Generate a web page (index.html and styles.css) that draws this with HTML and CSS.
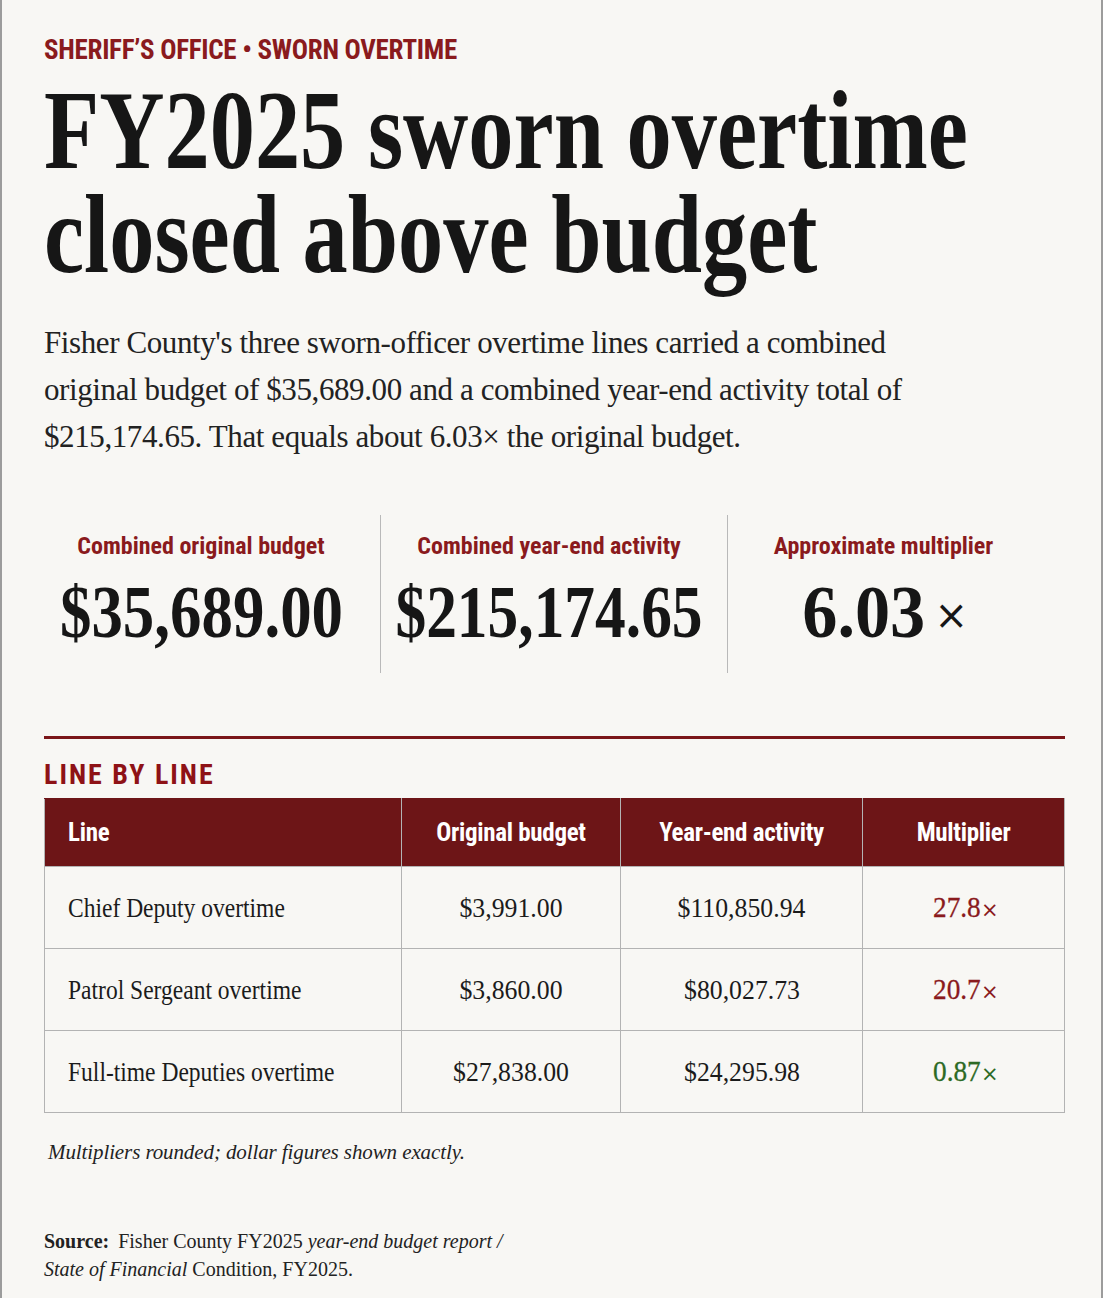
FILE: index.html
```html
<!DOCTYPE html>
<html lang="en">
<head>
<meta charset="utf-8">
<title>FY2025 sworn overtime closed above budget</title>
<link rel="stylesheet" href="styles.css">
</head>
<body>
<div class="page">
  <p class="kicker">SHERIFF’S OFFICE • SWORN OVERTIME</p>
  <h1 class="headline">FY2025 sworn overtime closed above budget</h1>
  <p class="dek">Fisher County's three sworn-officer overtime lines carried a combined original budget of $35,689.00 and a combined year-end activity total of $215,174.65. That equals about 6.03× the original budget.</p>

  <div class="stats">
    <div class="stat">
      <div class="stat-label">Combined original budget</div>
      <div class="stat-value"><span class="num num-a">$35,689.00</span></div>
    </div>
    <div class="stat">
      <div class="stat-label">Combined year-end activity</div>
      <div class="stat-value"><span class="num">$215,174.65</span></div>
    </div>
    <div class="stat">
      <div class="stat-label">Approximate multiplier</div>
      <div class="stat-value"><span class="num num-short">6.03</span><span class="times">×</span></div>
    </div>
  </div>

  <hr class="rule">
  <h2 class="section">LINE BY LINE</h2>

  <table class="lines">
    <thead>
      <tr>
        <th class="c-line">Line</th>
        <th>Original budget</th>
        <th>Year-end activity</th>
        <th>Multiplier</th>
      </tr>
    </thead>
    <tbody>
      <tr>
        <td class="c-line"><span class="txt">Chief Deputy overtime</span></td>
        <td><span class="fig">$3,991.00</span></td>
        <td><span class="fig">$110,850.94</span></td>
        <td class="mult over"><span class="fig">27.8</span><span class="x">×</span></td>
      </tr>
      <tr>
        <td class="c-line"><span class="txt">Patrol Sergeant overtime</span></td>
        <td><span class="fig">$3,860.00</span></td>
        <td><span class="fig">$80,027.73</span></td>
        <td class="mult over"><span class="fig">20.7</span><span class="x">×</span></td>
      </tr>
      <tr>
        <td class="c-line"><span class="txt">Full-time Deputies overtime</span></td>
        <td><span class="fig">$27,838.00</span></td>
        <td><span class="fig">$24,295.98</span></td>
        <td class="mult under"><span class="fig">0.87</span><span class="x">×</span></td>
      </tr>
    </tbody>
  </table>

  <p class="note">Multipliers rounded; dollar figures shown exactly.</p>

  <p class="source"><strong>Source:</strong> <span class="up">Fisher County FY2025</span> <em>year-end budget report /</em><br><em>State of Financial</em> <span class="up">Condition, FY2025.</span></p>
</div>
</body>
</html>
```

FILE: styles.css
```css
html, body {
  margin: 0;
  padding: 0;
  background: #f8f7f4;
}

.page {
  box-sizing: border-box;
  min-height: 100vh;
  border-left: 2px solid #9c9c9c;
  border-right: 2px solid #9c9c9c;
  background: #f8f7f4;
  padding: 33px 36px 40px 42px;
  overflow: hidden;
  color: #1b1b1b;
  font-family: "Liberation Serif", "Times New Roman", serif;
}

.kicker {
  margin: 0;
  font-family: "Roboto Condensed", "Liberation Sans Narrow", "DejaVu Sans Condensed", Roboto, sans-serif;
  font-weight: 700;
  font-size: 27px;
  line-height: 34px;
  letter-spacing: -0.3px;
  color: #8a1a1d;
}

.headline {
  margin: 11px 0 0;
  width: 125%;
  transform: scaleX(0.8);
  transform-origin: 0 0;
  font-family: "Liberation Serif", "Times New Roman", serif;
  font-weight: 700;
  font-size: 113px;
  line-height: 104px;
  color: #161616;
}

.dek {
  margin: 33px 0 0;
  max-width: 905px;
  font-size: 31px;
  line-height: 47px;
  letter-spacing: -0.4px;
  color: #222;
}

.stats {
  display: grid;
  grid-template-columns: 336px 347px 1fr;
  margin-top: 55px;
}

.stat {
  text-align: center;
  padding: 16px 0 21px;
  min-width: 0;
}

.stat:nth-child(1) { padding-right: 22px; }
.stat:nth-child(2) { border-left: 1px solid #b9b9b9; padding-right: 10px; }
.stat:nth-child(3) { border-left: 1px solid #b9b9b9; padding-right: 26px; }

.stat-label {
  font-family: "Roboto Condensed", "Liberation Sans Narrow", "DejaVu Sans Condensed", Roboto, sans-serif;
  font-weight: 700;
  font-size: 24px;
  line-height: 30px;
  color: #8a1a1d;
}

.stat-value {
  display: flex;
  justify-content: center;
  align-items: center;
  margin-top: 11px;
  height: 80px;
  font-size: 74px;
  line-height: 80px;
  font-weight: 700;
  color: #161616;
  white-space: nowrap;
}

.num {
  display: inline-block;
  transform: scaleX(0.83);
  transform-origin: 50% 50%;
}

.num-a {
  transform: scaleX(0.85);
}

.num-short {
  transform: scaleX(0.95);
}

.times {
  display: inline-block;
  font-family: "DejaVu Sans", sans-serif;
  font-weight: 400;
  font-size: 40px;
  line-height: 40px;
  margin-left: 6px;
  margin-top: 6px;
}

.rule {
  margin: 63px 0 0;
  border: 0;
  height: 3px;
  background: #7b1619;
}

.section {
  margin: 19px 0 0;
  font-family: "Roboto Condensed", "Liberation Sans Narrow", "DejaVu Sans Condensed", Roboto, sans-serif;
  font-weight: 700;
  font-size: 28px;
  line-height: 34px;
  letter-spacing: 2px;
  color: #8e1216;
}

.lines {
  margin-top: 6px;
  width: 100%;
  border-collapse: collapse;
  table-layout: fixed;
  border: 1px solid #b3b3b3;
}

.lines th,
.lines td {
  box-sizing: border-box;
}

.lines th:nth-child(1) { width: 357px; }
.lines th:nth-child(2) { width: 219px; }
.lines th:nth-child(3) { width: 242px; }

.lines th {
  height: 68px;
  padding: 0;
  background: #6d1517;
  color: #fff;
  font-family: "Roboto Condensed", "Liberation Sans Narrow", "DejaVu Sans Condensed", Roboto, sans-serif;
  font-weight: 700;
  font-size: 25px;
  letter-spacing: -0.3px;
  text-align: center;
  border: 1px solid #b3b3b3;
  border-top-color: #6d1517;
}

.lines th.c-line {
  text-align: left;
  padding-left: 23px;
}

.lines td {
  height: 82px;
  padding: 0;
  text-align: center;
  border: 1px solid #b3b3b3;
  font-size: 28px;
  color: #1b1b1b;
}

.lines td.c-line {
  text-align: left;
  padding-left: 23px;
}

.txt {
  display: inline-block;
  transform: scaleX(0.84);
  transform-origin: 0 50%;
  white-space: nowrap;
}

.fig {
  display: inline-block;
  transform: scaleX(0.92);
  transform-origin: 50% 50%;
}

.lines td.mult {
  white-space: nowrap;
  padding-left: 2px;
  font-size: 29px;
}

.lines td.mult .fig {
  transform: scaleX(0.94);
  transform-origin: 100% 50%;
  -webkit-text-stroke: 0.3px currentColor;
}

.x {
  font-family: "DejaVu Sans", sans-serif;
  font-size: 21px;
}

.lines td.over { color: #8a1a1d; }
.lines td.under { color: #2c6a25; }

.note {
  margin: 24px 0 0;
  padding-left: 4px;
  font-style: italic;
  font-size: 21px;
  line-height: 30px;
  letter-spacing: -0.1px;
  color: #222;
}

.source {
  margin: 60px 0 0;
  font-size: 20px;
  line-height: 28px;
  color: #222;
}

.source strong {
  font-weight: 700;
  margin-right: 4px;
}

.source em { font-style: italic; }
```
